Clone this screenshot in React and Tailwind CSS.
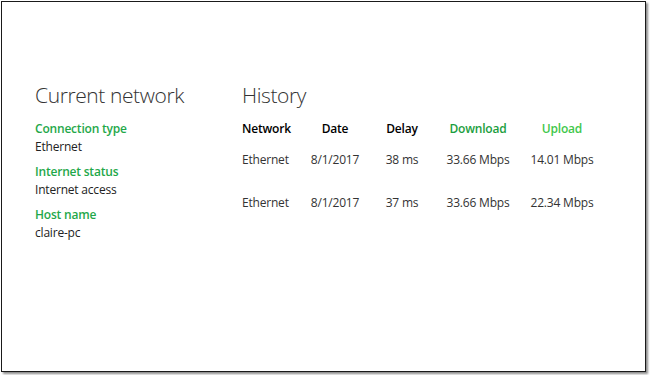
const info = [
  { label: 'Connection type', value: 'Ethernet' },
  { label: 'Internet status', value: 'Internet access' },
  { label: 'Host name', value: 'claire-pc' },
];

const rows = [
  ['Ethernet', '8/1/2017', '38 ms', '33.66 Mbps', '14.01 Mbps'],
  ['Ethernet', '8/1/2017', '37 ms', '33.66 Mbps', '22.34 Mbps'],
];

const cols = ['w-[58px] text-left', 'w-[70px] text-center', 'w-[64px] text-center', 'w-[88px] text-center', 'w-[80px] text-center'];

export default function App() {
  return (
    <div className="w-[650px] h-[375px] bg-white pl-px pt-px" style={{ fontFamily: '"Open Sans", "Noto Sans", sans-serif' }}>
      <div className="w-[645px] h-[371px] border border-[#1a1a1a] bg-white shadow-[2px_2px_2px_rgba(0,0,0,0.45)] flex pl-[33px] pt-[78px]">
        <div className="w-[207px]">
          <h1 className="text-[21px] leading-[30px] font-light text-[#333] tracking-[-0.4px]">Current network</h1>
          <div className="mt-[10px] flex flex-col gap-[7px]">
            {info.map((i) => (
              <div key={i.label}>
                <div className="text-[12px] leading-[18px] font-semibold text-[#1fa84a] tracking-[-0.2px]">{i.label}</div>
                <div className="text-[12px] leading-[18px] text-[#222] tracking-[-0.2px]">{i.value}</div>
              </div>
            ))}
          </div>
        </div>
        <div>
          <h1 className="text-[21px] leading-[30px] font-light text-[#333] tracking-[-0.4px]">History</h1>
          <div className="mt-[10px] flex text-[12px] leading-[18px] font-semibold tracking-[-0.2px]">
            <div className={cols[0] + ' text-black'}>Network</div>
            <div className={cols[1] + ' text-black'}>Date</div>
            <div className={cols[2] + ' text-black'}>Delay</div>
            <div className={cols[3] + ' text-[#1b9e3e]'}>Download</div>
            <div className={cols[4] + ' text-[#3fc74b]'}>Upload</div>
          </div>
          <div className="mt-[13px] flex flex-col gap-[25px]">
            {rows.map((r, ri) => (
              <div key={ri} className="flex text-[12px] leading-[18px] text-[#333] tracking-[-0.2px]">
                {r.map((c, ci) => (
                  <div key={ci} className={cols[ci] + ' whitespace-nowrap'}>{c}</div>
                ))}
              </div>
            ))}
          </div>
        </div>
      </div>
    </div>
  );
}
